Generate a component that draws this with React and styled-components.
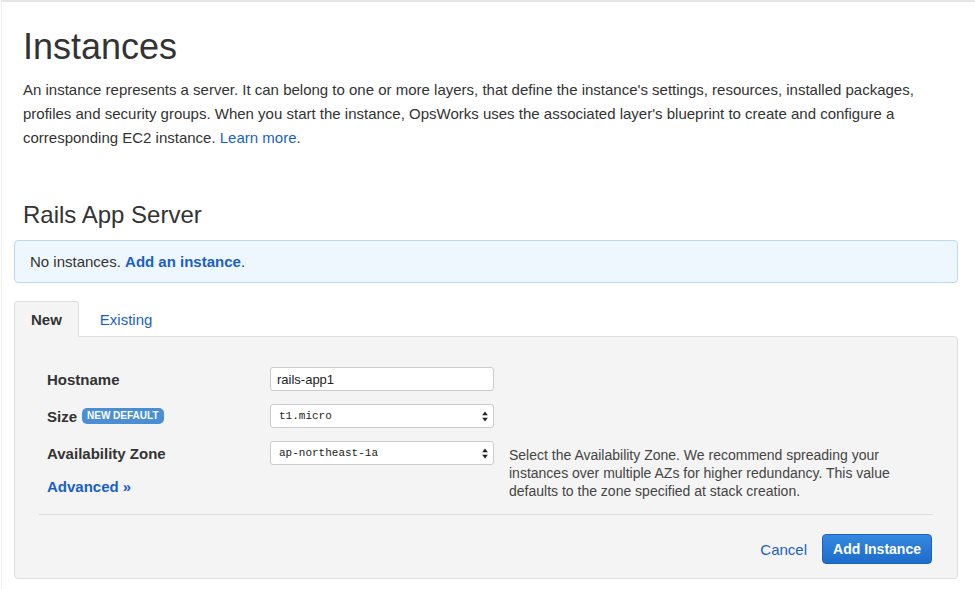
import React from "react";
import styled, { createGlobalStyle } from "styled-components";

const GlobalStyle = createGlobalStyle`
  html, body {
    margin: 0;
    padding: 0;
    background: #fff;
  }
  body {
    font-family: "Liberation Sans", Arial, sans-serif;
    color: #333;
  }
`;

const Page = styled.div`
  box-sizing: border-box;
  width: 975px;
  height: 589px;
  border-top: 2px solid #e6e6e6;
  border-left: 1px solid #efefef;
  margin-left: 1px;
  padding: 0 18px 0 12px;
  overflow: hidden;
`;

const Title = styled.h1`
  margin: 23px 0 0 9px;
  font-size: 36px;
  font-weight: 400;
  line-height: 44px;
  color: #333;
`;

const Intro = styled.p`
  margin: 9px 0 0 9px;
  font-size: 15px;
  line-height: 24px;
  color: #333;
`;

const Link = styled.a`
  color: #1a5fc8;
  text-decoration: none;
  font-weight: ${({ $bold }) => ($bold ? 700 : 400)};
  cursor: pointer;
`;

const Subtitle = styled.h2`
  margin: 50px 0 0 9px;
  font-size: 24px;
  font-weight: 400;
  line-height: 30px;
  color: #333;
`;

const Alert = styled.div`
  margin-top: 10px;
  height: 43px;
  box-sizing: border-box;
  display: flex;
  align-items: center;
  padding: 0 15px;
  background: #eff7fe;
  border: 1px solid #bcd8ef;
  border-radius: 4px;
  font-size: 15px;
`;

const Tabs = styled.div`
  display: flex;
  margin-top: 18px;
  position: relative;
  z-index: 1;
`;

const Tab = styled.div`
  box-sizing: border-box;
  height: 36px;
  display: flex;
  align-items: center;
  padding: 0 ${({ $active }) => ($active ? "16px" : "20px")};
  font-size: 15px;
  font-weight: ${({ $active }) => ($active ? 700 : 400)};
  color: ${({ $active }) => ($active ? "#333" : "#1a5fc8")};
  background: ${({ $active }) => ($active ? "#f4f4f4" : "transparent")};
  border: 1px solid ${({ $active }) => ($active ? "#ddd" : "transparent")};
  border-bottom-color: ${({ $active }) => ($active ? "#f4f4f4" : "transparent")};
  border-radius: 4px 4px 0 0;
  margin-bottom: -1px;
`;

const Panel = styled.div`
  box-sizing: border-box;
  height: 243px;
  background: #f4f4f4;
  border: 1px solid #ddd;
  border-radius: 0 4px 4px 4px;
  padding: 30px 24px 0 24px;
`;

const FormBody = styled.div`
  display: grid;
  grid-template-columns: 223px 224px 1fr;
  grid-template-rows: 37px 37px auto;
  align-items: start;
  padding: 0 0 0 8px;
  height: 147px;
  border-bottom: 1px solid #ddd;
`;

const LabelCell = styled.div`
  grid-row: 1 / span 3;
  display: flex;
  flex-direction: column;
  gap: 13px;
`;

const Label = styled.div`
  display: flex;
  align-items: center;
  gap: 5px;
  height: 24px;
  margin-top: ${({ $tight }) => ($tight ? "-4px" : "0")};
  font-size: 15px;
  font-weight: 700;
  color: #333;
`;

const Badge = styled.span`
  display: inline-block;
  background: #4a8fd6;
  color: #fff;
  font-size: 10px;
  font-weight: 700;
  line-height: 16px;
  padding: 0 5px;
  border-radius: 5px;
`;

const TextInput = styled.div`
  box-sizing: border-box;
  height: 24px;
  background: #fff;
  border: 1px solid #ccc;
  border-radius: 3px;
  display: flex;
  align-items: center;
  padding: 0 6px;
  font-size: 13px;
  color: #222;
`;

const Select = styled(TextInput)`
  justify-content: space-between;
  padding: 0 5px 0 8px;
  font-family: "Liberation Mono", "DejaVu Sans Mono", monospace;
  font-size: 11px;
`;

const Help = styled.div`
  padding: 5px 0 0 15px;
  font-size: 14px;
  line-height: 18px;
  color: #444;
`;

const Footer = styled.div`
  display: flex;
  justify-content: flex-end;
  align-items: center;
  gap: 15px;
  padding: 19px 1px 0 0;
`;

const CancelLink = styled(Link)`
  font-size: 15px;
`;

const PrimaryButton = styled.button`
  box-sizing: border-box;
  height: 30px;
  width: 110px;
  border: 1px solid #1a62c0;
  border-radius: 4px;
  background: linear-gradient(#3588df, #1e6cc9);
  color: #fff;
  font-family: "Liberation Sans", Arial, sans-serif;
  font-size: 14px;
  font-weight: 700;
  cursor: pointer;
`;

const Arrows = () => (
  <svg width="6" height="11" viewBox="0 0 6 11">
    <path d="M3 0.5 L5.8 4.3 H0.2 Z" fill="#222" />
    <path d="M3 10.5 L5.8 6.7 H0.2 Z" fill="#222" />
  </svg>
);

export default function App() {
  return (
    <>
      <GlobalStyle />
      <Page>
        <Title>Instances</Title>
        <Intro>
          An instance represents a server. It can belong to one or more layers, that define the
          instance's settings, resources, installed packages, profiles and security groups. When you
          start the instance, OpsWorks uses the associated layer's blueprint to create and configure
          a corresponding EC2 instance. <Link>Learn more</Link>.
        </Intro>

        <Subtitle>Rails App Server</Subtitle>
        <Alert>
          No instances.&nbsp;<Link $bold>Add an instance</Link>.
        </Alert>

        <Tabs>
          <Tab $active>New</Tab>
          <Tab>Existing</Tab>
        </Tabs>
        <Panel>
          <FormBody>
            <LabelCell>
              <Label>Hostname</Label>
              <Label>
                Size <Badge>NEW DEFAULT</Badge>
              </Label>
              <Label>Availability Zone</Label>
              <Label $tight>
                <Link $bold>Advanced »</Link>
              </Label>
            </LabelCell>
            <TextInput>rails-app1</TextInput>
            <div />
            <Select>
              t1.micro <Arrows />
            </Select>
            <div />
            <Select>
              ap-northeast-1a <Arrows />
            </Select>
            <Help>
              Select the Availability Zone. We recommend spreading your instances over multiple AZs
              for higher redundancy. This value defaults to the zone specified at stack creation.
            </Help>
          </FormBody>
          <Footer>
            <CancelLink>Cancel</CancelLink>
            <PrimaryButton>Add Instance</PrimaryButton>
          </Footer>
        </Panel>
      </Page>
    </>
  );
}
